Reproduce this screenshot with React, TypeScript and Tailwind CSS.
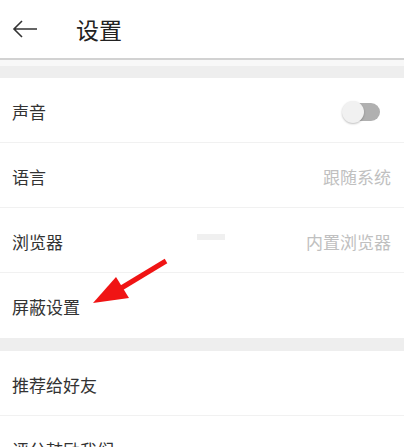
import React from "react";

const rows1 = [
  { title: "声音", toggle: true },
  { title: "语言", value: "跟随系统" },
  { title: "浏览器", value: "内置浏览器" },
  { title: "屏蔽设置" },
];

const rows2 = [{ title: "推荐给好友" }, { title: "评分鼓励我们" }];

const Toggle: React.FC = () => (
  <div className="relative w-[38px] h-[22px] mr-[11px] mt-[1px]">
    <div className="absolute right-0 top-[2px] w-[30px] h-[18px] rounded-full bg-[#b0b0b0]" />
    <div className="absolute left-0 top-0 w-[22px] h-[22px] rounded-full bg-[#f1f1f1] shadow-[0_1px_2px_rgba(0,0,0,0.25)]" />
  </div>
);

const Row: React.FC<{ title: string; value?: string; toggle?: boolean; last?: boolean }> = ({
  title,
  value,
  toggle,
  last,
}) => (
  <div
    className={`h-[65px] flex items-center justify-between pl-[12px] pr-[13px] pt-[3px] bg-white ${
      last ? "" : "border-b border-[#f1f1f1]"
    }`}
  >
    <span className="text-[17px] text-[#333]">{title}</span>
    {toggle && <Toggle />}
    {value && <span className="text-[17px] text-[#c0c0c0]">{value}</span>}
  </div>
);

export default function App() {
  return (
    <div
      className="relative w-[404px] h-[447px] overflow-hidden bg-white"
      style={{ fontFamily: '"Noto Sans CJK SC", "Noto Sans", sans-serif' }}
    >
      <div className="h-[60px] flex items-center border-b-2 border-[#d2d2d2]">
        <svg width="26" height="20" viewBox="0 0 26 20" className="ml-[12px]" fill="none">
          <path d="M25 10H2M10 2L2 10L10 18" stroke="#333" strokeWidth="1.6" />
        </svg>
        <span className="ml-[38px] text-[23px] text-[#222]">设置</span>
      </div>
      <div className="h-[6px] bg-[#f8f8f8]" />
      <div className="h-[12px] bg-[#eeeeee]" />
      {rows1.map((r, i) => (
        <Row key={r.title} {...r} last={i === rows1.length - 1} />
      ))}
      <div className="h-[13px] bg-[#eeeeee]" />
      {rows2.map((r) => (
        <Row key={r.title} {...r} />
      ))}

      <div className="absolute left-[197px] top-[234px] w-[28px] h-[6px] bg-[#f0f0f0]" />

      <svg className="absolute left-0 top-0" width="404" height="447" viewBox="0 0 404 447">
        <line x1="166" y1="261" x2="118" y2="290" stroke="#f01414" strokeWidth="5" />
        <polygon points="93,303 116,277 129,298" fill="#f01414" />
      </svg>
    </div>
  );
}
